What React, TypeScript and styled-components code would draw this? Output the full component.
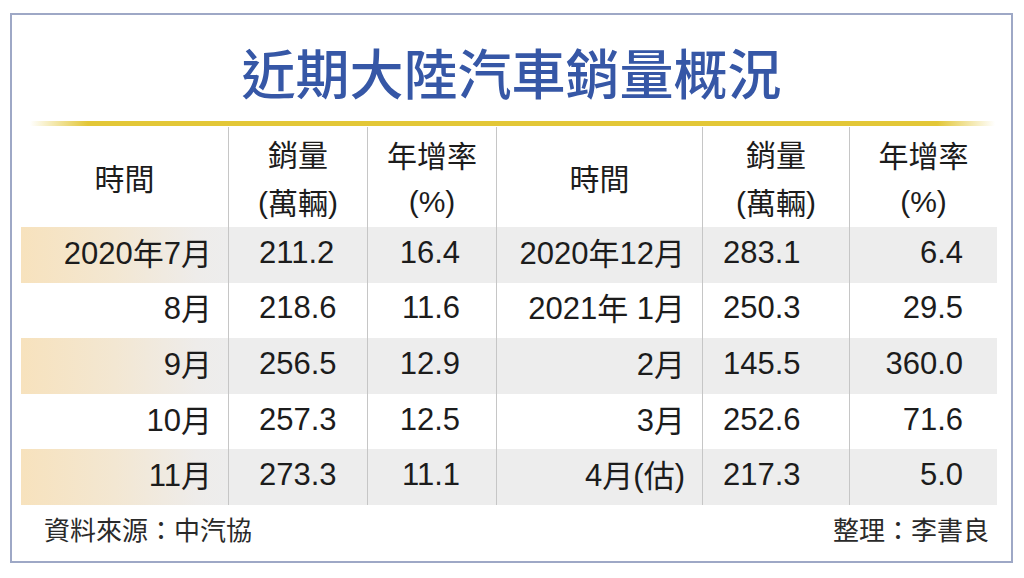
import styled, { createGlobalStyle } from 'styled-components';

const GlobalStyle = createGlobalStyle`
  html, body {
    margin: 0;
    padding: 0;
    background: #ffffff;
  }
  body {
    font-family: 'Liberation Sans', 'Noto Sans CJK TC', sans-serif;
    color: #1c1c1c;
  }
`;

const Page = styled.div`
  width: 1024px;
  height: 578px;
  padding: 13px 11px 15px 10px;
  box-sizing: border-box;
`;

const Frame = styled.div`
  height: 100%;
  border: 2px solid #9ea8c6;
  box-sizing: border-box;
  display: flex;
  flex-direction: column;
  background: #ffffff;
`;

const Title = styled.h1`
  margin: 0;
  padding-top: 27px;
  text-align: center;
  font-family: 'Noto Sans CJK TC', sans-serif;
  font-weight: 500;
  font-size: 54px;
  line-height: 60px;
  color: #3657a6;
`;

const GoldLine = styled.div`
  margin: 19px 16px 0 18px;
  height: 5px;
  background: linear-gradient(
    to right,
    rgba(226, 198, 52, 0) 0%,
    #e3c737 6%,
    #e3c737 94%,
    rgba(226, 198, 52, 0) 100%
  );
`;

const Table = styled.div`
  margin: 1px 14px 0 9px;
  display: grid;
  grid-template-columns: 207px 139px 129px 206px 147px 148px;
  grid-template-rows: 100px repeat(5, 55.6px);
`;

const HeadCell = styled.div<{ $first?: boolean }>`
  display: flex;
  flex-direction: column;
  align-items: center;
  justify-content: center;
  padding-top: 2px;
  font-size: 30px;
  line-height: 46px;
  color: #1c1c1c;
  border-left: ${(p) => (p.$first ? 'none' : '1.5px solid #c6c6c6')};
`;

type Align = 'left' | 'right';

const Cell = styled.div<{
  $first?: boolean;
  $stripe?: boolean;
  $lead?: boolean;
  $align: Align;
  $pad: number;
}>`
  display: flex;
  align-items: center;
  justify-content: ${(p) => (p.$align === 'left' ? 'flex-start' : 'flex-end')};
  padding: ${(p) => (p.$align === 'left' ? `0 0 4px ${p.$pad}px` : `0 ${p.$pad}px 4px 0`)};
  font-size: 31px;
  line-height: 40px;
  white-space: pre;
  color: #1c1c1c;
  border-left: ${(p) => (p.$first ? 'none' : '1.5px solid #c6c6c6')};
  background: ${(p) =>
    !p.$stripe
      ? '#ffffff'
      : p.$lead
      ? 'linear-gradient(to right, #f7e2bd 0%, #f3e7d2 45%, #eeecea 85%, #ededed 100%)'
      : '#ededed'};
`;

const Line = styled.span`
  display: block;
`;

const Han = styled.span`
  font-family: 'Noto Sans CJK TC', sans-serif;
  vertical-align: -1px;
`;

const Footer = styled.div`
  flex: 1;
  display: flex;
  justify-content: space-between;
  align-items: center;
  padding: 0 22px 8px 32px;
  font-family: 'Noto Sans CJK TC', sans-serif;
  font-size: 26px;
  color: #2a2a2a;
`;

const rows = [
  ['2020年7月', '211.2', '16.4', '2020年12月', '283.1', '6.4'],
  ['8月', '218.6', '11.6', '2021年 1月', '250.3', '29.5'],
  ['9月', '256.5', '12.9', '2月', '145.5', '360.0'],
  ['10月', '257.3', '12.5', '3月', '252.6', '71.6'],
  ['11月', '273.3', '11.1', '4月(估)', '217.3', '5.0'],
];

// alignment and inner padding for each of the six columns
const cols: { align: Align; pad: number }[] = [
  { align: 'right', pad: 16 },
  { align: 'left', pad: 30 },
  { align: 'right', pad: 36 },
  { align: 'right', pad: 17 },
  { align: 'left', pad: 20 },
  { align: 'right', pad: 34 },
];

// keep digits and CJK on one inline line so they share a baseline
function typeset(text: string) {
  return (
    <Line>
      {text
        .split(/([\u3400-\u9fff]+)/)
        .filter(Boolean)
        .map((part, i) => (/[\u3400-\u9fff]/.test(part) ? <Han key={i}>{part}</Han> : part))}
    </Line>
  );
}

function Header() {
  const half = [
    <HeadCell key="t">{typeset('時間')}</HeadCell>,
    <HeadCell key="s">
      {typeset('銷量')}
      {typeset('(萬輛)')}
    </HeadCell>,
    <HeadCell key="r">
      {typeset('年增率')}
      {typeset('(%)')}
    </HeadCell>,
  ];
  return (
    <>
      <HeadCell $first>{typeset('時間')}</HeadCell>
      {half.slice(1)}
      {half}
    </>
  );
}

export default function App() {
  return (
    <>
      <GlobalStyle />
      <Page>
        <Frame>
          <Title>近期大陸汽車銷量概況</Title>
          <GoldLine />
          <Table>
            <Header />
            {rows.map((row, r) =>
              row.map((value, c) => (
                <Cell
                  key={`${r}-${c}`}
                  $first={c === 0}
                  $stripe={r % 2 === 0}
                  $lead={c === 0}
                  $align={cols[c].align}
                  $pad={cols[c].pad}
                >
                  {typeset(value)}
                </Cell>
              ))
            )}
          </Table>
          <Footer>
            <span>資料來源：中汽協</span>
            <span>整理：李書良</span>
          </Footer>
        </Frame>
      </Page>
    </>
  );
}
